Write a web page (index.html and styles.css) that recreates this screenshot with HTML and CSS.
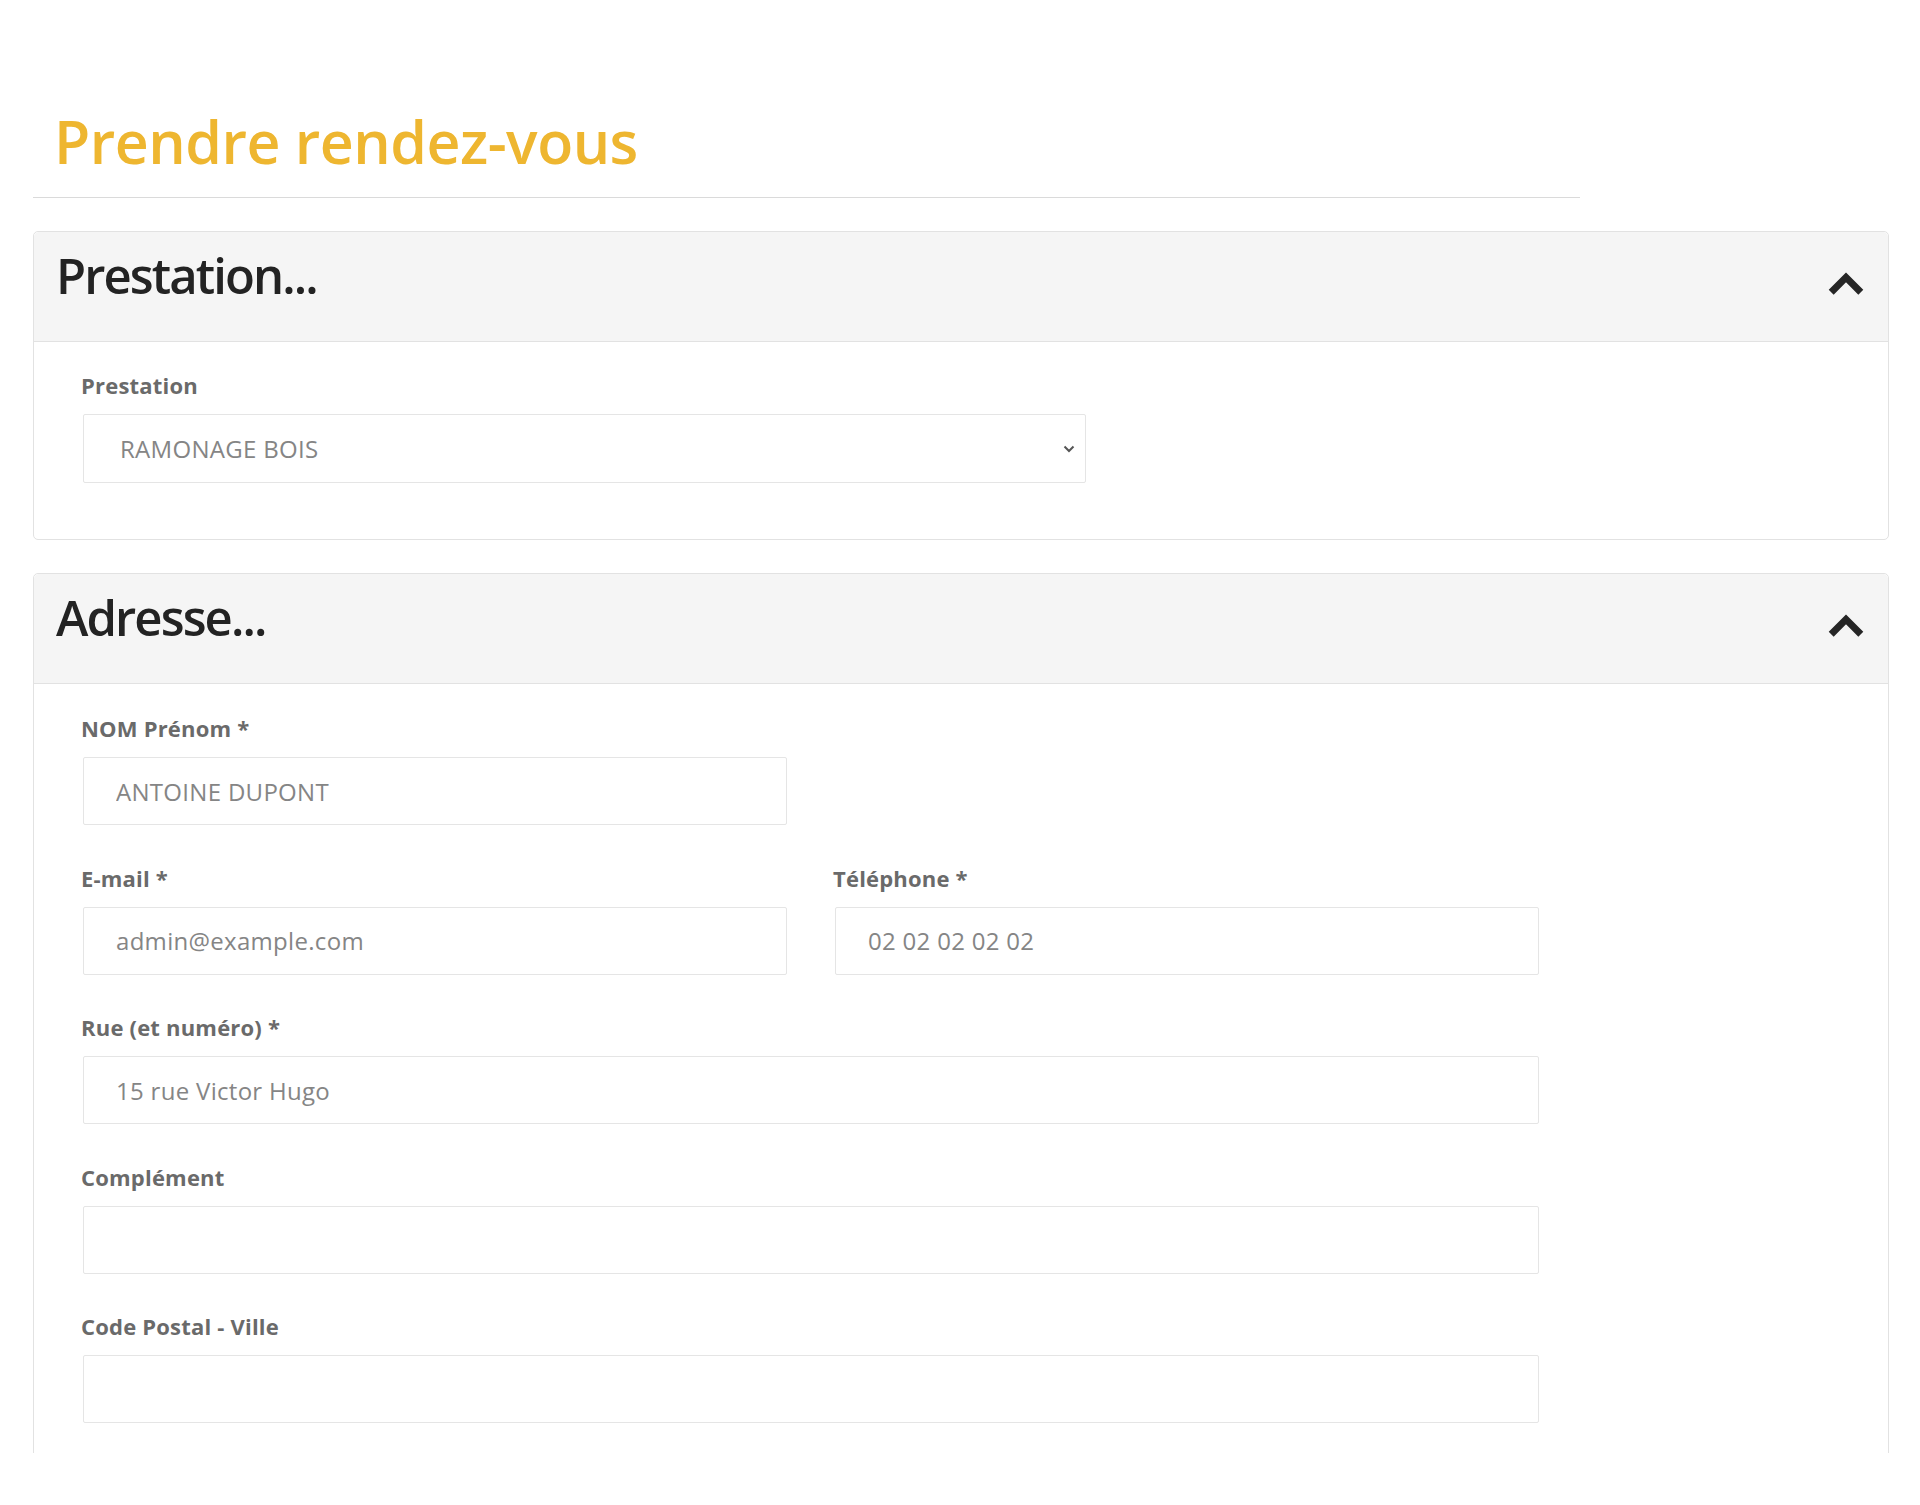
FILE: index.html
```html
<!DOCTYPE html>
<html lang="fr">
<head>
<meta charset="utf-8">
<title>Prendre rendez-vous</title>
<link rel="stylesheet" href="styles.css">
</head>
<body>
<div class="page">
  <h1 class="title">Prendre rendez-vous</h1>
  <hr class="rule">

  <section class="card">
    <header class="card-head">
      <h2 class="card-title">Prestation...</h2>
      <svg class="toggle" viewBox="0 0 36 23" width="36" height="23" aria-hidden="true"><path d="M3.2 20.2L18 5.4l14.8 14.8"/></svg>
    </header>
    <div class="card-body card-body-first">
      <div class="field">
        <label class="label" for="prestation">Prestation</label>
        <div class="select-wrap">
          <select id="prestation" class="control select">
            <option>RAMONAGE BOIS</option>
          </select>
          <svg class="select-arrow" viewBox="0 0 12 8" width="12" height="8" aria-hidden="true"><path d="M1.5 1.5l4.5 4.5 4.5-4.5"/></svg>
        </div>
      </div>
    </div>
  </section>

  <section class="card card-second">
    <header class="card-head">
      <h2 class="card-title">Adresse...</h2>
      <svg class="toggle" viewBox="0 0 36 23" width="36" height="23" aria-hidden="true"><path d="M3.2 20.2L18 5.4l14.8 14.8"/></svg>
    </header>
    <div class="card-body card-body-form">
      <div class="form-grid">
        <div class="field">
          <label class="label" for="nom">NOM Prénom *</label>
          <input id="nom" class="control" type="text" value="ANTOINE DUPONT">
        </div>
        <div class="field"></div>
        <div class="field">
          <label class="label" for="email">E-mail *</label>
          <input id="email" class="control" type="text" value="admin@example.com">
        </div>
        <div class="field">
          <label class="label" for="tel">Téléphone *</label>
          <input id="tel" class="control" type="text" value="02 02 02 02 02">
        </div>
        <div class="field field-wide">
          <label class="label" for="rue">Rue (et numéro) *</label>
          <input id="rue" class="control" type="text" value="15 rue Victor Hugo">
        </div>
        <div class="field field-wide">
          <label class="label" for="comp">Complément</label>
          <input id="comp" class="control" type="text" value="">
        </div>
        <div class="field field-wide">
          <label class="label" for="cp">Code Postal - Ville</label>
          <input id="cp" class="control" type="text" value="">
        </div>
      </div>
    </div>
  </section>
</div>
</body>
</html>
```

FILE: styles.css
```css
* {
  box-sizing: border-box;
}

html, body {
  margin: 0;
  padding: 0;
  background: #ffffff;
}

body {
  font-family: "Open Sans", "Noto Sans", sans-serif;
  color: #222222;
}

.page {
  height: 1453px;
  overflow: hidden;
  padding: 0 31px 0 33px;
}

.title {
  margin: 106px 0 0 0;
  padding-left: 21px;
  font-size: 59px;
  line-height: 71px;
  font-weight: 600;
  letter-spacing: -0.5px;
  color: #eeb630;
}

.rule {
  width: 1547px;
  height: 1px;
  margin: 20px 0 33px 0;
  border: 0;
  background: #dadada;
}

.card {
  width: 1856px;
  border: 1px solid #e2e2e2;
  border-radius: 5px;
  background: #ffffff;
}

.card-second {
  margin-top: 33px;
}

.card-head {
  height: 110px;
  display: flex;
  justify-content: space-between;
  align-items: flex-start;
  padding: 19px 24px 0 22px;
  background: #f5f5f5;
  border-bottom: 1px solid #e2e2e2;
  border-radius: 5px 5px 0 0;
}

.card-title {
  margin: 0;
  font-size: 49px;
  line-height: 49px;
  font-weight: 600;
  letter-spacing: -1.9px;
  color: #232323;
}

.toggle {
  margin-top: 21px;
  fill: none;
  stroke: #262626;
  stroke-width: 7;
  stroke-linejoin: miter;
  stroke-linecap: butt;
}

.card-body {
  padding-left: 49px;
}

.card-body-first {
  padding-top: 28px;
  padding-bottom: 56px;
}

.card-body-form {
  padding-top: 29px;
  padding-bottom: 80px;
}

.form-grid {
  width: 1456px;
  display: grid;
  grid-template-columns: 704px 704px;
  column-gap: 48px;
  row-gap: 37.5px;
}

.field-wide {
  grid-column: 1 / 3;
}

.label {
  display: block;
  margin-bottom: 14px;
  text-indent: -2px;
  font-size: 22px;
  line-height: 30px;
  font-weight: 700;
  letter-spacing: 0.2px;
  color: #6a6a6a;
}

.control {
  display: block;
  width: 100%;
  height: 68px;
  margin: 0;
  padding: 0 32px;
  border: 1px solid #e5e5e5;
  border-radius: 2px;
  background: #ffffff;
  font-family: "Open Sans", "Noto Sans", sans-serif;
  font-size: 24px;
  letter-spacing: 0.3px;
  color: #858585;
  outline: none;
}

.select-wrap {
  position: relative;
  width: 1003px;
}

.select {
  height: 69px;
  padding-left: 36px;
  appearance: none;
  -webkit-appearance: none;
}

.select-arrow {
  position: absolute;
  right: 11px;
  top: 31px;
  fill: none;
  stroke: #555555;
  stroke-width: 2;
}
```
